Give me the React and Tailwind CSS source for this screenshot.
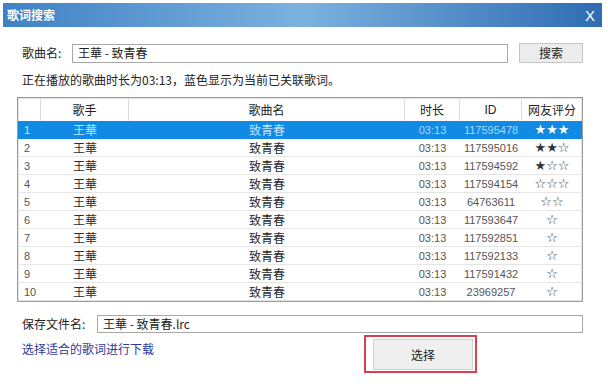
const CJK = { fontFamily: '"Noto Sans CJK SC", "Noto Sans", sans-serif' };
const NUM = { fontFamily: '"Liberation Sans", Arial, sans-serif' };
const STAR = { fontFamily: '"DejaVu Sans", sans-serif' };

const rows = [
  { id: '117595478', stars: '★★★' },
  { id: '117595016', stars: '★★☆' },
  { id: '117594592', stars: '★☆☆' },
  { id: '117594154', stars: '☆☆☆' },
  { id: '64763611', stars: '☆☆' },
  { id: '117593647', stars: '☆' },
  { id: '117592851', stars: '☆' },
  { id: '117592133', stars: '☆' },
  { id: '117591432', stars: '☆' },
  { id: '23969257', stars: '☆' },
];

const cols = 'grid grid-cols-[23px_88px_276px_55px_62px_1fr]';

export default function App() {
  return (
    <div className="w-[608px] h-[391px] bg-white pt-[3px] px-[3px] overflow-hidden text-[12px] text-[#222]" style={CJK}>
      {/* Title bar */}
      <div className="h-[24px] w-[599px] flex items-center justify-between pl-[4px] pr-[7px] bg-gradient-to-r from-[#3f82c4] via-[#7cb1df] to-[#2e6db3]">
        <span className="text-white text-[12px] font-bold">歌词搜索</span>
        <span className="text-white text-[15px] leading-none" style={NUM}>X</span>
      </div>

      <div className="pl-[14px]">
        {/* Song name row */}
        <div className="mt-[16px] h-[20px] flex items-center">
          <span className="w-[55px] pl-[5px]">歌曲名:</span>
          <div className="w-[436px] h-[19px] border border-[#a8a8a8] flex items-center pl-[5px]">王華 - 致青春</div>
          <button className="ml-[11px] w-[64px] h-[20px] bg-[#ececec] border border-[#c6c6c6] text-[12px]">搜索</button>
        </div>

        {/* Info */}
        <div className="mt-[7px] h-[20px] flex items-center pl-[5px]">
          正在播放的歌曲时长为03:13，蓝色显示为当前已关联歌词。
        </div>

        {/* Table */}
        <div className="mt-[7px] w-[566px] border border-[#9c9c9c] shadow-[inset_0_0_0_1px_#e2e2e2]">
          <div className={`${cols} h-[23px] items-center`}>
            <div className="h-full border-r border-[#dcdcdc]"></div>
            <div className="h-full flex items-center justify-center border-r border-[#dcdcdc]">歌手</div>
            <div className="h-full flex items-center justify-center border-r border-[#dcdcdc]">歌曲名</div>
            <div className="h-full flex items-center justify-center border-r border-[#dcdcdc]">时长</div>
            <div className="h-full flex items-center justify-center border-r border-[#dcdcdc]" style={NUM}>ID</div>
            <div className="h-full flex items-center justify-center">网友评分</div>
          </div>
          {rows.map((r, i) => {
            const sel = i === 0;
            return (
              <div
                key={i}
                className={`${cols} h-[18px] items-center border-b ${sel ? 'bg-[#118ae4] border-[#118ae4] text-[#bfe3ff]' : 'border-[#e6e6e6] text-[#2a2a2a]'} ${i === 9 ? 'border-b-0' : ''}`}
              >
                <div className={`pl-[6px] text-[11px] ${sel ? 'text-[#cfe9ff]' : 'text-[#555]'}`} style={NUM}>{i + 1}</div>
                <div className="text-center">王華</div>
                <div className="text-center">致青春</div>
                <div className={`text-center text-[11px] ${sel ? 'text-[#a9d6fa]' : 'text-[#555]'}`} style={NUM}>03:13</div>
                <div className={`text-center text-[11px] ${sel ? 'text-[#a9d6fa]' : 'text-[#555]'}`} style={NUM}>{r.id}</div>
                <div className={`text-center text-[13px] leading-[18px] ${sel ? 'text-white' : 'text-[#333]'}`} style={STAR}>{r.stars}</div>
              </div>
            );
          })}
        </div>

        {/* Save file name */}
        <div className="mt-[13px] h-[18px] flex items-center">
          <span className="w-[80px] pl-[5px]">保存文件名:</span>
          <div className="w-[486px] h-[18px] border border-[#a8a8a8] flex items-center pl-[5px]">王華 - 致青春.lrc</div>
        </div>

        {/* Link + select button */}
        <div className="mt-[2px] flex">
          <div className="w-[347px] pl-[5px] pt-[5px]">
            <span className="text-[#2c3b9c]">选择适合的歌词进行下载</span>
          </div>
          <div className="w-[113px] h-[38px] border-2 border-[#d8424e] pl-[7px] pr-[2px] pt-[2px] pb-[1px]">
            <button className="w-full h-full bg-[#efefef] border border-[#d0d0d0] text-[12px]">选择</button>
          </div>
        </div>
      </div>
    </div>
  );
}
